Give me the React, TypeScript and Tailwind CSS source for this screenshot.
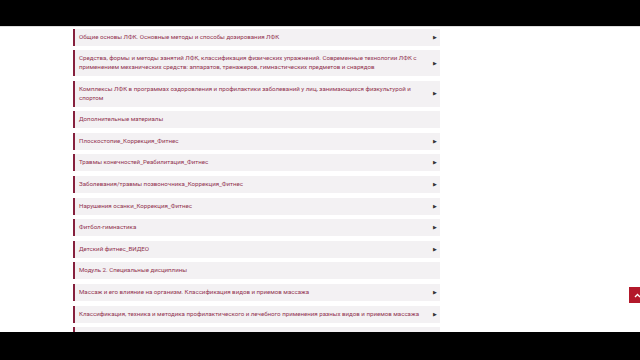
import React from "react";

// Section list of the course page
interface Section {
  id: number;
  lines: string[];
  hasArrow: boolean;
}

const sections: Section[] = [
  { id: 1, lines: ["Общие основы ЛФК. Основные методы и способы дозирования ЛФК"], hasArrow: true },
  {
    id: 2,
    lines: [
      "Средства, формы и методы занятий ЛФК, классификация физических упражнений. Современные технологии ЛФК с",
      "применением механических средств: аппаратов, тренажеров, гимнастических предметов и снарядов",
    ],
    hasArrow: true,
  },
  {
    id: 3,
    lines: [
      "Комплексы ЛФК в программах оздоровления и профилактики заболеваний у лиц, занимающихся физкультурой и",
      "спортом",
    ],
    hasArrow: true,
  },
  { id: 4, lines: ["Дополнительные материалы"], hasArrow: false },
  { id: 5, lines: ["Плоскостопие_Коррекция_Фитнес"], hasArrow: true },
  { id: 6, lines: ["Травмы конечностей_Реабилитация_Фитнес"], hasArrow: true },
  { id: 7, lines: ["Заболевания/травмы позвоночника_Коррекция_Фитнес"], hasArrow: true },
  { id: 8, lines: ["Нарушения осанки_Коррекция_Фитнес"], hasArrow: true },
  { id: 9, lines: ["Фитбол-гимнастика"], hasArrow: true },
  { id: 10, lines: ["Детский фитнес_ВИДЕО"], hasArrow: true },
  { id: 11, lines: ["Модуль 2. Специальные дисциплины"], hasArrow: false },
  { id: 12, lines: ["Массаж и его влияние на организм. Классификация видов и приемов массажа"], hasArrow: true },
  {
    id: 13,
    lines: ["Классификация, техника и методика профилактического и лечебного применения разных видов и приемов массажа"],
    hasArrow: true,
  },
  // next row is hidden under the bottom bar, only its edge shows
  { id: 14, lines: [], hasArrow: false },
];

const SectionRow: React.FC<{ section: Section }> = ({ section }) => (
  <div className="flex min-h-[17px] items-center border-l-2 border-[#86203d] bg-[#f3f1f3] py-[4px] pl-[4px] pr-[3px]">
    <div className="min-w-0 flex-1 text-[6.15px] leading-[9px] text-[#923350]">
      {section.lines.map((line, i) => (
        <div key={i} className="whitespace-nowrap">
          {line}
        </div>
      ))}
    </div>
    {section.hasArrow && <span className="shrink-0 text-[5px] leading-none text-[#333]">▶</span>}
  </div>
);

export default function App() {
  return (
    <div
      className="flex h-[360px] w-[640px] flex-col overflow-hidden bg-white"
      style={{ fontFamily: "Roboto, 'Noto Sans', sans-serif" }}
    >
      <div className="h-[26px] shrink-0 bg-black" />
      <div className="relative flex-1 overflow-hidden border-t border-[#dedede]">
        <div className="ml-[73px] flex w-[367px] flex-col gap-[4.6px] pt-[1.5px]">
          {sections.map((s) => (
            <SectionRow key={s.id} section={s} />
          ))}
        </div>
        {/* scroll to top */}
        <div className="absolute right-[-5px] top-[260px] flex h-4 w-4 items-center justify-center bg-[#b3192b]">
          <svg width="7" height="5" viewBox="0 0 7 5" fill="none" stroke="white" strokeWidth="1.3">
            <path d="M1 4 L3.5 1.5 L6 4" />
          </svg>
        </div>
      </div>
      <div className="h-[28px] shrink-0 bg-black" />
    </div>
  );
}
